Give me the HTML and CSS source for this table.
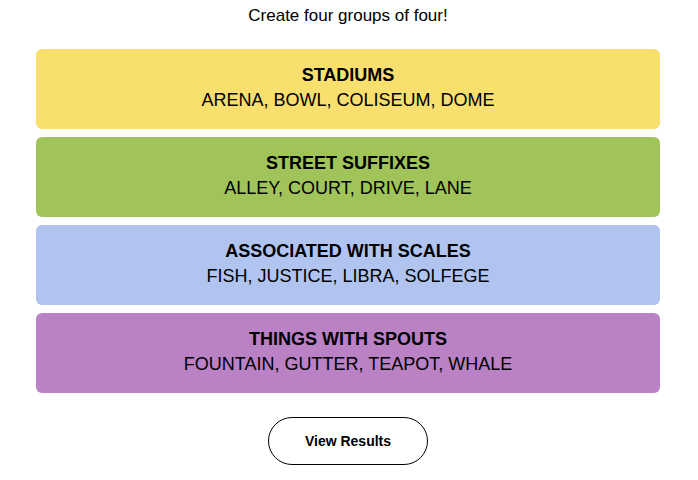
FILE: index.html
```html
<!DOCTYPE html>
<html>
<head>
<meta charset="utf-8">
<link rel="stylesheet" href="styles.css">
</head>
<body>
<main class="game">
  <p class="prompt">Create four groups of four!</p>
  <section class="groups">
    <div class="group yellow">
      <h3 class="title">STADIUMS</h3>
      <p class="words">ARENA, BOWL, COLISEUM, DOME</p>
    </div>
    <div class="group green">
      <h3 class="title">STREET SUFFIXES</h3>
      <p class="words">ALLEY, COURT, DRIVE, LANE</p>
    </div>
    <div class="group blue">
      <h3 class="title">ASSOCIATED WITH SCALES</h3>
      <p class="words">FISH, JUSTICE, LIBRA, SOLFEGE</p>
    </div>
    <div class="group purple">
      <h3 class="title">THINGS WITH SPOUTS</h3>
      <p class="words">FOUNTAIN, GUTTER, TEAPOT, WHALE</p>
    </div>
  </section>
  <div class="actions">
    <button class="results">View Results</button>
  </div>
</main>
</body>
</html>
```
FILE: styles.css
```css
* { box-sizing: border-box; }
html, body { margin: 0; padding: 0; background: #fff; }
body {
  font-family: "Liberation Sans", Arial, sans-serif;
  color: #000;
}
.game {
  width: 624px;
  margin: 0 0 0 36px;
  display: flex;
  flex-direction: column;
  align-items: center;
}
.prompt {
  margin: 6px 0 0;
  font-size: 17px;
  line-height: 20px;
}
.groups {
  margin-top: 23px;
  width: 100%;
  display: flex;
  flex-direction: column;
  gap: 8px;
}
.group {
  height: 80px;
  border-radius: 6px;
  padding-bottom: 4px;
  display: flex;
  flex-direction: column;
  align-items: center;
  justify-content: center;
}
.yellow { background: #f9df6d; }
.green { background: #a0c35a; }
.blue { background: #b0c4ef; }
.purple { background: #ba81c5; }
.title {
  margin: 0;
  font-size: 18px;
  font-weight: 700;
  line-height: 24px;
}
.words {
  margin: 1px 0 0;
  font-size: 18px;
  line-height: 24px;
}
.actions {
  margin-top: 24px;
}
.results {
  width: 160px;
  height: 48px;
  border: 1px solid #000;
  border-radius: 24px;
  background: #fff;
  font-family: "Liberation Sans", Arial, sans-serif;
  font-size: 14px;
  font-weight: 600;
  color: #000;
}
```
